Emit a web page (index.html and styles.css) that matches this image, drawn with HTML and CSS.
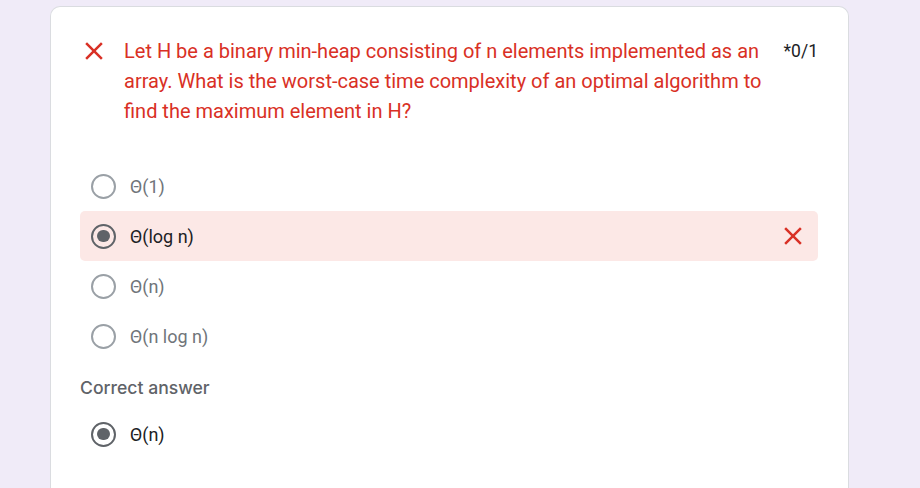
FILE: index.html
```html
<!DOCTYPE html>
<html>
<head>
<meta charset="utf-8">
<link rel="stylesheet" href="styles.css">
</head>
<body>
<div class="card">
  <div class="question">
    <svg class="qicon" viewBox="0 0 24 24" width="30" height="30"><path fill="#d93025" d="M19 6.41L17.59 5 12 10.59 6.41 5 5 6.41 10.59 12 5 17.59 6.41 19 12 13.41 17.59 19 19 17.59 13.41 12z"/></svg>
    <div class="qtext">Let H be a binary min-heap consisting of n elements implemented as an array. What is the worst-case time complexity of an optimal algorithm to find the maximum element in H?</div>
    <div class="score">*0/1</div>
  </div>
  <div class="options">
    <div class="opt"><span class="radio"></span><span class="label">Θ(1)</span></div>
    <div class="opt wrong"><span class="radio on"></span><span class="label sel">Θ(log n)</span>
      <svg class="xicon" viewBox="0 0 24 24" width="30" height="30"><path fill="#d93025" d="M19 6.41L17.59 5 12 10.59 6.41 5 5 6.41 10.59 12 5 17.59 6.41 19 12 13.41 17.59 19 19 17.59 13.41 12z"/></svg>
    </div>
    <div class="opt"><span class="radio"></span><span class="label">Θ(n)</span></div>
    <div class="opt"><span class="radio"></span><span class="label">Θ(n log n)</span></div>
  </div>
  <div class="correct-title">Correct answer</div>
  <div class="opt"><span class="radio on"></span><span class="label sel">Θ(n)</span></div>
</div>
</body>
</html>
```

FILE: styles.css
```css
html, body {
  margin: 0;
  padding: 0;
  background: #f0ebf8;
  height: 488px;
  overflow: hidden;
}
body {
  font-family: Roboto, "Noto Sans", sans-serif;
}
.card {
  box-sizing: border-box;
  margin: 6px 0 0 50px;
  width: 799px;
  height: 482px;
  background: #fff;
  border: 1px solid #dadce0;
  border-bottom: 0;
  border-radius: 10px 10px 0 0;
  padding: 29px 30px 0 29px;
}
.question {
  display: flex;
  align-items: flex-start;
}
.qicon {
  flex: none;
  margin: 0 15px 0 -1px;
}
.qtext {
  flex: 1;
  color: #d93025;
  font-size: 20px;
  line-height: 30px;
  padding-right: 14px;
}
.score {
  flex: none;
  color: #202124;
  font-size: 17.5px;
  line-height: 30px;
}
.options {
  margin-top: 35px;
}
.opt {
  display: flex;
  align-items: center;
  height: 50px;
  padding: 0 10px 0 11px;
  border-radius: 5px;
}
.opt.wrong {
  background: #fce8e6;
}
.radio {
  box-sizing: border-box;
  width: 25px;
  height: 25px;
  border: 2.5px solid #9aa0a6;
  border-radius: 50%;
  flex: none;
  display: flex;
  align-items: center;
  justify-content: center;
}
.radio.on {
  border-color: #5f6368;
}
.radio.on::after {
  content: "";
  width: 12.5px;
  height: 12.5px;
  border-radius: 50%;
  background: #5f6368;
}
.label {
  margin-left: 14px;
  font-size: 18px;
  color: #70757a;
  flex: 1;
}
.label.sel {
  color: #202124;
}
.xicon {
  flex: none;
}
.correct-title {
  margin-top: 14px;
  margin-bottom: 8px;
  font-family: Inter, sans-serif;
  font-weight: 500;
  font-size: 17.6px;
  color: #5f6368;
  line-height: 26px;
}
```
